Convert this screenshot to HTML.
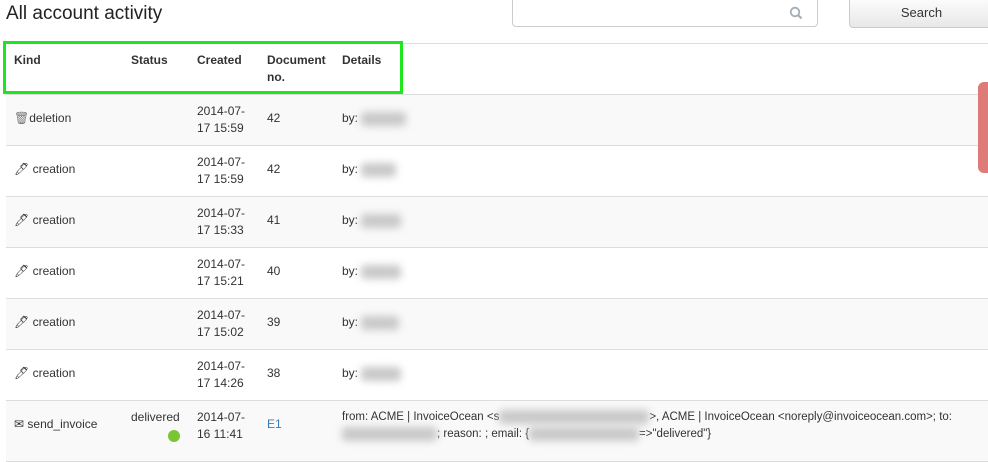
<!DOCTYPE html>
<html><head><meta charset="utf-8"><style>
body{margin:0;width:988px;height:450px;overflow:hidden;background:#fff;font-family:"Liberation Sans",Arial,sans-serif;font-size:12px;color:#333;position:relative}
h1{position:absolute;left:6px;top:3px;margin:0;font-weight:normal;font-size:19px;color:#222}
.inp{position:absolute;left:512px;top:-6px;width:306px;height:33px;border:1px solid #ccc;border-radius:4px;box-sizing:border-box}
.btn{position:absolute;left:849px;top:-6px;width:145px;height:34px;border:1px solid #ccc;border-radius:4px;background:linear-gradient(#fff,#e8e8e8);box-sizing:border-box;text-align:center;font-size:13px;line-height:36px;color:#333}
.tbl{position:absolute;left:6px;top:43px;width:982px;border-top:1px solid #ddd}
.row{position:relative;height:50px;border-bottom:1px solid #ddd}
.row.s{background:#f9f9f9}
.c{position:absolute;top:15px;line-height:17px}
.hd .c{font-weight:bold;top:8px}
.k{left:8px}.st{left:125px}.cr{left:191px}.dn{left:261px}.dt{left:336px}
.row:not(.hd) .c.cr{top:8px}
.blur{display:inline-block;height:14px;background:#c8c8c8;filter:blur(4px);vertical-align:middle;border-radius:4px}
.green{position:absolute;left:3px;top:41px;width:400px;height:53px;border:3px solid #1ee61e;box-sizing:border-box}
.red{position:absolute;left:978px;top:82px;width:14px;height:91px;background:#de7b78;border-radius:6px 0 0 6px}
a{color:#3a7ab8;text-decoration:none}
</style></head><body>
<h1>All account activity</h1>
<div class="inp"><svg style="position:absolute;right:14px;top:11px" width="14" height="14" viewBox="0 0 14 14"><circle cx="6" cy="6" r="4.3" fill="none" stroke="#a5adb8" stroke-width="1.8"/><path d="M9 9l3.5 3.5" stroke="#a5adb8" stroke-width="2.2"/></svg></div>
<div class="btn">Search</div>
<div class="tbl">
<div class="row hd"><span class="c k">Kind</span><span class="c st">Status</span><span class="c cr">Created</span><span class="c dn">Document<br>no.</span><span class="c dt">Details</span></div>
<div class="row s"><span class="c k"><span style="color:#777">🗑</span>deletion</span><span class="c cr">2014-07-<br>17 15:59</span><span class="c dn">42</span><span class="c dt">by: <span class="blur" style="width:45px"></span></span></div>
<div class="row"><span class="c k">🖊 creation</span><span class="c cr">2014-07-<br>17 15:59</span><span class="c dn">42</span><span class="c dt">by: <span class="blur" style="width:35px"></span></span></div>
<div class="row s"><span class="c k">🖊 creation</span><span class="c cr">2014-07-<br>17 15:33</span><span class="c dn">41</span><span class="c dt">by: <span class="blur" style="width:40px"></span></span></div>
<div class="row"><span class="c k">🖊 creation</span><span class="c cr">2014-07-<br>17 15:21</span><span class="c dn">40</span><span class="c dt">by: <span class="blur" style="width:40px"></span></span></div>
<div class="row s"><span class="c k">🖊 creation</span><span class="c cr">2014-07-<br>17 15:02</span><span class="c dn">39</span><span class="c dt">by: <span class="blur" style="width:38px"></span></span></div>
<div class="row"><span class="c k">🖊 creation</span><span class="c cr">2014-07-<br>17 14:26</span><span class="c dn">38</span><span class="c dt">by: <span class="blur" style="width:40px"></span></span></div>
<div class="row s" style="height:60px"><span class="c k" style="top:15px">✉ send_invoice</span><span class="c st" style="top:8px">delivered<br><span style="display:inline-block;width:12px;height:12px;border-radius:50%;background:#7bc436;margin:4px 0 0 37px"></span></span><span class="c cr">2014-07-<br>16 11:41</span><span class="c dn"><a>E1</a></span><span class="c dt" style="top:8px;font-size:11.5px">from: ACME | InvoiceOcean &lt;s<span class="blur" style="width:150px"></span>&gt;, ACME | InvoiceOcean &lt;noreply@invoiceocean.com&gt;; to:<br><span class="blur" style="width:95px"></span>; reason: ; email: {<span class="blur" style="width:110px"></span>=&gt;"delivered"}</span></div>
</div>
<div class="green"></div>
<div class="red"></div>
</body></html>
